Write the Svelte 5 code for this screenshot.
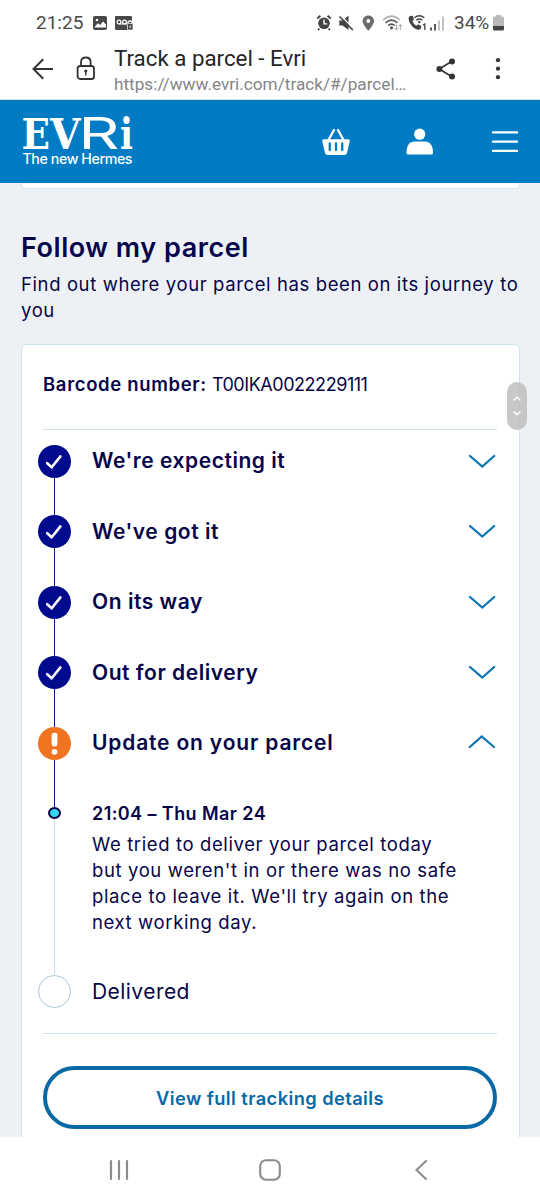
<script lang="ts">
	let openStep = $state('update');

	const steps = [
		{ id: 'expecting', label: "We're expecting it", state: 'done' },
		{ id: 'got', label: "We've got it", state: 'done' },
		{ id: 'way', label: 'On its way', state: 'done' },
		{ id: 'out', label: 'Out for delivery', state: 'done' },
		{ id: 'update', label: 'Update on your parcel', state: 'alert' }
	];

	const message = [
		'We tried to deliver your parcel today',
		"but you weren't in or there was no safe",
		"place to leave it. We'll try again on the",
		'next working day.'
	];

	function toggle(id: string) {
		openStep = openStep === id ? '' : id;
	}
</script>

<div class="screen">
	<div class="status">
		<span class="clock">21:25</span>
		<svg class="left-icons" width="42" height="16" viewBox="0 0 42 16">
			<rect x="1" y="1" width="14" height="14" rx="2" fill="#484848" />
			<path d="M2.5 12 L6 8.2 L8.2 10 L11 6.5 L14 9.5 V12.5 H2.5 Z" fill="#fff" />
			<circle cx="5" cy="5" r="1.3" fill="#fff" />
			<path d="M24 1 H39 Q40 1 40 2 V15 H24 Q23 15 23 14 V2 Q23 1 24 1 Z" fill="#484848" />
			<circle cx="27" cy="7" r="1.9" fill="none" stroke="#fff" stroke-width="1.2" />
			<circle cx="32.5" cy="7" r="1.9" fill="none" stroke="#fff" stroke-width="1.2" />
			<path d="M27 9 H35 M36 9 V7 Q38 5 40 7 V9" fill="none" stroke="#fff" stroke-width="1.2" />
			<rect x="35.5" y="8.5" width="5.5" height="6.5" rx="1" fill="#484848" stroke="#fff" stroke-width=".7" />
			<path d="M38.2 10.5 V13" stroke="#fff" stroke-width="1" />
		</svg>
		<svg class="right-icons" width="132" height="18" viewBox="0 0 132 18">
			<!-- alarm -->
			<g fill="none" stroke="#444">
				<circle cx="8" cy="9.3" r="5.8" fill="#444" stroke="none" />
				<path d="M1.3 4.6 L4.4 1.8 M14.7 4.6 L11.6 1.8" stroke-width="2" />
				<path d="M3.4 14.5 L2 16.2 M12.6 14.5 L14 16.2" stroke-width="1.6" />
				<path d="M8 5.6 V9.9 H11.2" stroke="#fff" stroke-width="1.4" />
			</g>
			<!-- muted -->
			<path d="M23.3 6.5 H26.5 L32.5 1.5 V16 L26.5 11.5 H23.3 Z" fill="#444" />
			<path d="M25 1.8 L38 15.5" stroke="#fff" stroke-width="1.4" />
			<path d="M23.5 2.5 L36.8 16" stroke="#444" stroke-width="1.7" />
			<!-- location -->
			<path d="M52.3 1.5 C48.8 1.5 46.6 4 46.6 7 C46.6 10.6 52.3 16.8 52.3 16.8 S58 10.6 58 7 C58 4 55.8 1.5 52.3 1.5 Z" fill="#6b6b6b" />
			<circle cx="52.3" cy="7" r="2" fill="#fff" />
			<!-- wifi -->
			<g fill="none" stroke-width="1.6">
				<path d="M67 6 Q75.5 -1.8 84 6" stroke="#b5b5b5" />
				<path d="M69.6 8.8 Q75.5 3.6 81.4 8.8" stroke="#555" />
				<path d="M72.2 11.6 Q75.5 8.8 78.8 11.6" stroke="#555" />
			</g>
			<circle cx="75.5" cy="13.8" r="1.6" fill="#555" />
			<path d="M80.5 10.5 V16 M78.8 14.2 L80.5 16 L82.2 14.2 M84.3 16 V10.5 M82.6 12.3 L84.3 10.5 L86 12.3" fill="none" stroke="#a5a5a5" stroke-width="1" />
			<!-- wifi call -->
			<path d="M94 2 L96.8 1.7 L98 5.4 L96.3 7.2 Q97.7 10.2 100.3 11.7 L102.3 10.2 L105.3 12 L104.7 15 Q102 16.8 98 13.9 Q92.8 9.8 92.6 4.6 Q92.7 2.8 94 2 Z" fill="#444" />
			<g fill="none" stroke="#444" stroke-width="1.3">
				<path d="M98.3 3.8 Q103.3 -.3 108.3 3.8" />
				<path d="M100.3 6.2 Q103.3 3.8 106.3 6.2" />
				<path d="M106.8 11.2 L108.8 10 V16" />
			</g>
			<circle cx="103.3" cy="8" r="1.2" fill="#444" />
			<!-- signal -->
			<path d="M115 13.5 V16.5 M119 10 V16.5" stroke="#444" stroke-width="1.8" />
			<path d="M123 6.5 V16.5 M127 2.5 V16.5" stroke="#bdbdbd" stroke-width="1.8" />
		</svg>
		<span class="percent">34%</span>
		<svg class="battery" width="11" height="16" viewBox="0 0 11 16">
			<path d="M3 0 H8 V1.5 H9.5 Q11 1.5 11 3 V11 H0 V3 Q0 1.5 1.5 1.5 H3 Z" fill="#b9b9b9" />
			<path d="M0 11 H11 V14 Q11 15.5 9.5 15.5 H1.5 Q0 15.5 0 14 Z" fill="#444" />
		</svg>
	</div>

	<div class="toolbar">
		<svg class="back" width="22" height="22" viewBox="0 0 22 22" fill="none" stroke="#333" stroke-width="2">
			<path d="M21 11 H1.8 M11.2 1.3 L1.5 11 L11.2 20.7" />
		</svg>
		<svg class="lock" width="20" height="25" viewBox="0 0 20 25" fill="none" stroke="#333" stroke-width="1.8">
			<rect x="1.6" y="10" width="16.4" height="13" rx="2.6" />
			<path d="M5 10 V6 Q5 1.5 9.8 1.5 T14.6 6 V10" />
			<circle cx="9.8" cy="15" r="1.6" fill="#333" stroke="none" />
			<path d="M9.8 15 V19.5" stroke-width="1.4" />
		</svg>
		<div class="page-info">
			<div class="page-title">Track a parcel - Evri</div>
			<div class="page-url">https://www.evri.com/track/#/parcel…</div>
		</div>
		<svg class="share" width="20" height="22" viewBox="0 0 20 22" fill="#333">
			<path d="M16 3.3 L3.2 11 L16 18.7" fill="none" stroke="#333" stroke-width="1.7" />
			<circle cx="16" cy="3.5" r="3" />
			<circle cx="3.4" cy="11" r="3" />
			<circle cx="16" cy="18.5" r="3" />
		</svg>
		<svg class="more" width="6" height="22" viewBox="0 0 6 22" fill="#333">
			<circle cx="3" cy="2.2" r="2.1" />
			<circle cx="3" cy="10.7" r="2.1" />
			<circle cx="3" cy="19.2" r="2.1" />
		</svg>
	</div>

	<header class="site-header">
		<svg class="logo" width="114" height="52" viewBox="0 0 114 52" fill="#fff">
			<text class="slab" x="-0.5" y="32.7" textLength="28.5" lengthAdjust="spacingAndGlyphs">E</text>
			<text class="slab" x="28" y="32.7" textLength="30.5" lengthAdjust="spacingAndGlyphs">V</text>
			<text class="thin" x="56.5" y="32.7" textLength="41" lengthAdjust="spacingAndGlyphs">R</text>
			<text class="slab" x="98" y="32.7" textLength="13" lengthAdjust="spacingAndGlyphs">i</text>
			<text class="tagline" x="0.5" y="48" textLength="110">The new Hermes</text>
		</svg>
		<svg class="basket" width="28" height="28" viewBox="0 0 28 28" fill="#fff">
			<path d="M2 11.2 H26 Q28 11.2 27.8 13 L25 25 Q24.4 27 22.5 27 H5.5 Q3.6 27 3 25 L.2 13 Q0 11.2 2 11.2 Z" />
			<path d="M6.5 12 L12 2 M21.5 12 L16 2" stroke="#fff" stroke-width="2.3" stroke-linecap="round" />
			<path d="M7.8 15.5 V22 M14 15.5 V22 M20.2 15.5 V22" stroke="#007bc4" stroke-width="2.3" stroke-linecap="round" />
		</svg>
		<svg class="user" width="28" height="28" viewBox="0 0 28 28" fill="#fff">
			<circle cx="13.7" cy="6.2" r="5.6" />
			<path d="M.5 25 Q.5 13.5 9 13.5 H18.5 Q27 13.5 27 25 Q27 26.5 25.5 26.5 H2 Q.5 26.5 .5 25 Z" />
		</svg>
		<svg class="menu" width="28" height="24" viewBox="0 0 28 24" stroke="#fff" stroke-width="2.4" stroke-linecap="round">
			<path d="M2 2.4 H26 M2 11.6 H26 M2 20.9 H26" />
		</svg>
	</header>

	<main>
		<div class="prev-card"></div>

		<h1>Follow my parcel</h1>
		<p class="intro">Find out where your parcel has been on its journey to<br />you</p>

		<section class="card">
			<div class="barcode"><strong>Barcode number:</strong><span class="code">T00IKA0022229111</span></div>

			<ol class="timeline">
				{#each steps as step}
					<li class="step" class:alert={step.state === 'alert'}>
						<div class="rail">
							{#if step.state === 'done'}
								<svg class="marker" width="33" height="33" viewBox="0 0 33 33">
									<circle cx="16.5" cy="16.5" r="16.5" fill="#000a8c" />
									<path d="M9.2 18.2 L13.7 22.3 L22.4 11.4" fill="none" stroke="#fff" stroke-width="2.6" stroke-linecap="round" stroke-linejoin="round" />
								</svg>
							{:else}
								<svg class="marker" width="33" height="33" viewBox="0 0 33 33">
									<circle cx="16.5" cy="16.5" r="16.5" fill="#f07320" />
									<rect x="13.6" y="5.8" width="5.8" height="13.6" rx="2.4" fill="#fff" />
									<circle cx="16.5" cy="24.8" r="2.9" fill="#fff" />
								</svg>
							{/if}
							<span class="line"></span>
						</div>
						<button class="step-head" onclick={() => toggle(step.id)}>
							<span class="label" class:wide={step.state === 'alert'}>{step.label}</span>
							<svg class="chevron" class:open={openStep === step.id} width="28" height="15" viewBox="0 0 28 15">
								<path d="M2 2 L14.3 12.5 L26.2 2" fill="none" stroke="#0c75b5" stroke-width="2.3" stroke-linecap="round" />
							</svg>
						</button>
					</li>
				{/each}

				<li class="step event">
					<div class="rail">
						<span class="dot"></span>
						<span class="line light"></span>
					</div>
					<div class="details">
						<div class="time">21:04 – Thu Mar 24</div>
						{#each message as text}
							<div class="text">{text}</div>
						{/each}
					</div>
				</li>

				<li class="step last">
					<div class="rail"><span class="empty"></span></div>
					<div class="label pending">Delivered</div>
				</li>
			</ol>

			<button class="cta">View full tracking details</button>
		</section>

		<div class="scroller">
			<svg width="10" height="24" viewBox="0 0 10 24" fill="none" stroke="#fff" stroke-width="1.5">
				<path d="M1.5 6.5 L5 3.2 L8.5 6.5 M1.5 17.5 L5 20.8 L8.5 17.5" />
			</svg>
		</div>
	</main>

	<nav class="system-nav">
		<svg width="20" height="22" viewBox="0 0 20 22" stroke="#8c8c8c" stroke-width="2.2" stroke-linecap="round">
			<path d="M2 2 V20 M10 2 V20 M18 2 V20" />
		</svg>
		<svg class="home" width="22" height="22" viewBox="0 0 22 22" fill="none" stroke="#8c8c8c" stroke-width="2.1">
			<rect x="1.2" y="1.2" width="19.6" height="19.6" rx="5.8" />
		</svg>
		<svg width="14" height="22" viewBox="0 0 14 22" fill="none" stroke="#8c8c8c" stroke-width="2.1" stroke-linecap="round">
			<path d="M12 2 L2.5 11 L12 20" />
		</svg>
	</nav>
</div>

<style>
	:global(body) {
		margin: 0;
		background: #fff;
	}

	.screen {
		display: flex;
		flex-direction: column;
		width: 540px;
		height: 1200px;
		overflow: hidden;
		font-family: Inter, sans-serif;
		color: #06054a;
	}

	svg {
		display: block;
		flex: none;
	}

	.status {
		display: flex;
		align-items: center;
		height: 45px;
		padding: 0 36px 0 36px;
		box-sizing: border-box;
		font: 19px Roboto, sans-serif;
		color: #4a4a4a;
	}

	.clock {
		width: 56px;
	}

	.right-icons {
		margin-left: auto;
		margin-right: 6px;
	}

	.percent {
		width: 39px;
		white-space: nowrap;
	}

	.toolbar {
		display: flex;
		align-items: center;
		height: 55px;
		box-sizing: border-box;
		padding: 0 39px 7px 32px;
		border-bottom: 1px solid #c3e5f5;
		font-family: Roboto, sans-serif;
	}

	.back {
		margin-top: 1px;
	}

	.lock {
		margin: 0 18px 0 22px;
	}

	.page-info {
		flex: 1;
		padding-top: 3px;
		white-space: nowrap;
	}

	.page-title {
		font-size: 22.3px;
		line-height: 28px;
		color: #252525;
	}

	.page-url {
		font-size: 17.2px;
		line-height: 25px;
		color: #858585;
	}

	.more {
		margin-left: 39px;
	}

	.site-header {
		display: flex;
		align-items: center;
		height: 83px;
		flex: none;
		box-sizing: border-box;
		padding: 0 22px;
		background: #007bc4;
		border-top: 1px solid #1c74ae;
	}

	.logo {
		margin-right: 186px;
		overflow: visible;
	}

	.slab {
		font: bold 43.5px 'DejaVu Serif', serif;
	}

	.thin {
		font: 400 43.5px Inter, sans-serif;
	}

	.tagline {
		font: 500 14.2px Inter, sans-serif;
	}

	.user {
		margin-left: 56px;
	}

	.menu {
		margin-left: auto;
		margin-right: -1px;
	}

	main {
		position: relative;
		display: flex;
		flex-direction: column;
		flex: 1;
		min-height: 0;
		overflow: hidden;
		padding: 0 20px 0 21px;
		background: #edf1f5;
	}

	.prev-card {
		flex: none;
		height: 5px;
		background: #fff;
		border: 1px solid #d3e5ee;
		border-top: 0;
		border-radius: 0 0 5px 5px;
	}

	h1 {
		margin: 42px 0 0;
		font-size: 27px;
		line-height: 34px;
		font-weight: 600;
		letter-spacing: 0.54px;
	}

	.intro {
		margin: 6px 0 21px;
		font-size: 18.5px;
		line-height: 26px;
		letter-spacing: 0.61px;
		white-space: nowrap;
	}

	.card {
		flex: none;
		height: 850px;
		box-sizing: border-box;
		padding: 0 22px 0 21px;
		background: #fff;
		border: 1px solid #cfe3ec;
		border-radius: 5px;
	}

	.barcode {
		display: flex;
		height: 85px;
		line-height: 79px;
		box-sizing: border-box;
		border-bottom: 1px solid #cfe3ec;
		font-size: 18px;
		white-space: nowrap;
	}

	.barcode strong {
		font-size: 18.5px;
		font-weight: 600;
		letter-spacing: 0.66px;
	}

	.code {
		margin-left: 5px;
		letter-spacing: -0.45px;
	}

	.timeline {
		list-style: none;
		margin: 0;
		padding: 14.5px 0 25.5px;
		border-bottom: 1px solid #cfe3ec;
	}

	.step {
		display: flex;
		height: 70.5px;
		margin-left: -5px;
	}

	.step.alert {
		height: 80px;
	}

	.step.event {
		height: 168px;
	}

	.step.last {
		height: 33px;
	}

	.rail {
		display: flex;
		flex-direction: column;
		align-items: center;
		width: 33px;
		margin-right: 21px;
		flex: none;
	}

	.line {
		flex: 1;
		width: 1px;
		background: #14148a;
	}

	.line.light {
		background: #c5dde6;
	}

	.dot {
		width: 13px;
		height: 12px;
		box-sizing: border-box;
		border: 2px solid #050547;
		border-radius: 50%;
		background: #35d5f2;
	}

	.empty {
		width: 33px;
		height: 33px;
		box-sizing: border-box;
		border: 1px solid #a9c9d8;
		border-radius: 50%;
	}

	.step-head {
		display: flex;
		align-items: center;
		justify-content: space-between;
		flex: 1;
		height: 33px;
		padding: 0 1px 0 0;
		border: 0;
		background: none;
		font-family: inherit;
		color: inherit;
		cursor: pointer;
	}

	.label {
		font-size: 21px;
		line-height: 34px;
		font-weight: 600;
		letter-spacing: 0.54px;
		white-space: nowrap;
	}

	.label.wide {
		letter-spacing: 0.83px;
	}

	.label.pending {
		font-weight: 400;
		letter-spacing: 0.45px;
	}

	.chevron.open {
		transform: translateY(-2px) rotate(180deg);
	}

	.details {
		margin-top: -7px;
		white-space: nowrap;
	}

	.time {
		font-size: 18px;
		line-height: 27px;
		font-weight: 600;
		letter-spacing: 0.42px;
		margin-bottom: 4px;
	}

	.text {
		font-size: 18.5px;
		line-height: 26px;
		letter-spacing: 0.62px;
	}

	.cta {
		display: block;
		width: 100%;
		height: 63px;
		margin-top: 32px;
		border: 4px solid #0969a5;
		border-radius: 32px;
		background: #fff;
		font: 600 18.3px Inter, sans-serif;
		letter-spacing: 0.42px;
		color: #0969a5;
	}

	.scroller {
		position: absolute;
		top: 199px;
		right: 13px;
		display: flex;
		align-items: center;
		justify-content: center;
		width: 20px;
		height: 48px;
		border-radius: 10px;
		background: rgba(190, 190, 190, 0.85);
	}

	.system-nav {
		display: flex;
		align-items: center;
		height: 63px;
		flex: none;
		box-sizing: border-box;
		padding: 3px 0 0 109px;
		background: #fff;
	}

	.home {
		margin: 0 133px 0 130px;
	}
</style>
